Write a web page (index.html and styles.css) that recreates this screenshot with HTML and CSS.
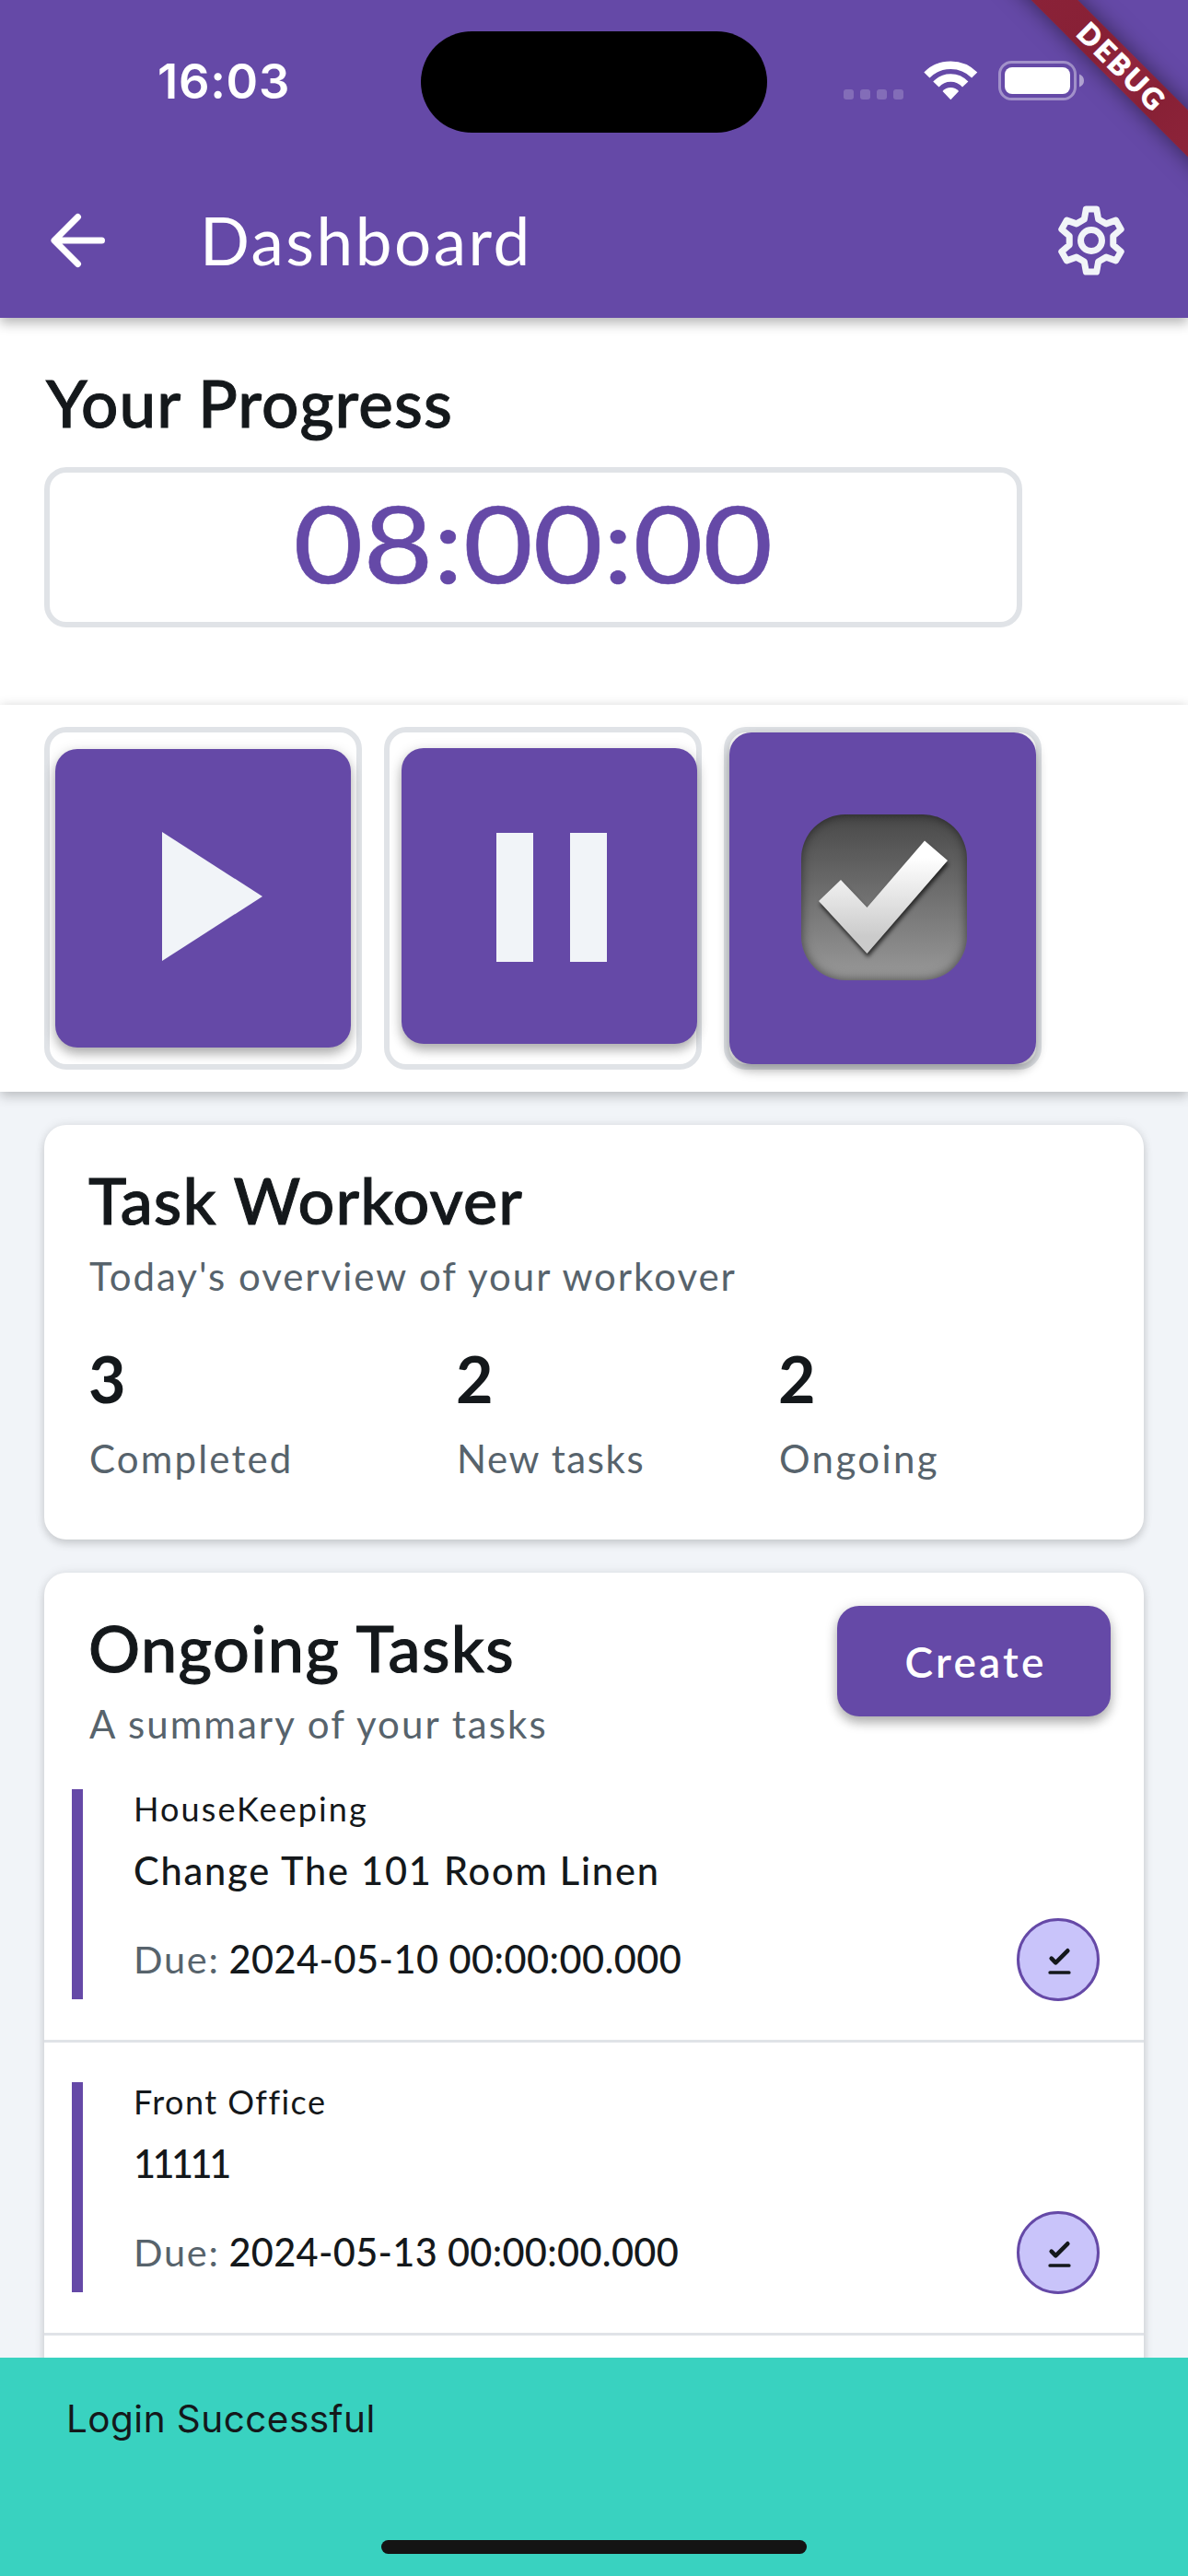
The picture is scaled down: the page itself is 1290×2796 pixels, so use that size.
FILE: index.html
```
<!DOCTYPE html>
<html lang="en">
<head>
<meta charset="utf-8">
<title>Dashboard</title>
<link rel="stylesheet" href="styles.css">
</head>
<body>
<div class="screen">
  <header class="header">
    <div class="status">
      <span class="clock">16:03</span>
      <svg class="status-icons" width="262" height="44" viewBox="916 64 262 44">
        <g fill="#fff" fill-opacity=".2">
          <rect x="916" y="96" width="11" height="11" rx="3"/><rect x="934" y="96" width="11" height="11" rx="3"/><rect x="952" y="96" width="11" height="11" rx="3"/><rect x="970" y="96" width="11" height="11" rx="3"/>
        </g>
        <g fill="none" stroke="#fff" stroke-width="8.6">
          <path d="M1006.4 80.5A36.4 36.4 0 0 1 1058.2 80.5"/>
          <path d="M1016.4 90.5A21.5 21.5 0 0 1 1048.2 90.5"/>
        </g>
        <path fill="#fff" d="M1032.3 107.2L1023.5 98Q1027 94 1032.3 94T1041.1 98Z"/>
        <rect x="1085.5" y="66.5" width="82" height="40" rx="13" fill="none" stroke="#fff" stroke-opacity=".4" stroke-width="3"/>
        <rect x="1091" y="72" width="71" height="29" rx="8" fill="#fff"/>
        <path d="M1172 79.500Q1177 81.500 1177 86.500T1172 93.500Z" fill="#fff" fill-opacity=".5"/>
      </svg>
      <div class="island"></div>
    </div>
    <div class="toolbar">
      <svg width="60" height="60" viewBox="55 231 60 60" fill="none" stroke="#fff" stroke-width="7" stroke-linecap="round" stroke-linejoin="round"><path d="M84.500 235.500L59 261L84.500 286.500M60 261H110.500"/></svg>
      <h1 class="title">Dashboard</h1>
      <svg width="76" height="76" viewBox="-114 -114 228 228" fill="none" stroke="#f1f4f8" stroke-width="21"><path stroke-linejoin="round" d="M-23-69L-17-102H17L23-69L48.300-54.400L79.800-65.700L96.800-36.300L71.300-14.600V14.600L96.800 36.300L79.800 65.700L48.300 54.400L23 69L17 102H-17L-23 69L-48.300 54.400L-79.800 65.700L-96.800 36.300L-71.300 14.600V-14.600L-96.800-36.300L-79.800-65.700L-48.300-54.400Z"/><circle r="34.500"/></svg>
    </div>
    <div class="debug">DEBUG</div>
  </header>

  <section class="progress">
    <h2 class="heading progress-title">Your Progress</h2>
    <div class="timer"><span class="timer-value">08:00:00</span></div>
  </section>

  <section class="controls">
    <div class="control">
      <button class="control-button play" aria-label="Start"><svg width="109" height="140" viewBox="0 0 109 140"><path d="M0 0L109 70L0 140Z" fill="#f1f4f8"/></svg></button>
    </div>
    <div class="control">
      <button class="control-button pause" aria-label="Pause"><svg width="120" height="140" viewBox="0 0 120 140"><path d="M0 0H40V140H0ZM80 0H120V140H80Z" fill="#f1f4f8"/></svg></button>
    </div>
    <div class="control">
      <button class="control-button done" aria-label="Finish">
        <span class="check-box"><svg class="check" width="180" height="180" viewBox="0 0 180 180"><defs><linearGradient id="silver" x1="0" y1="0" x2="0" y2="1"><stop offset=".15" stop-color="#fff"/><stop offset=".85" stop-color="#cbcbcb"/></linearGradient></defs><path d="M19 94L43 71L71.500 101L134 28.500L159 50L71.500 151Z" fill="url(#silver)"/></svg></span>
      </button>
    </div>
  </section>

  <main class="content">
    <section class="card overview">
      <h2 class="heading">Task Workover</h2>
      <p class="sub overview-sub">Today's overview of your workover</p>
      <div class="stats">
        <div><div class="number">3</div><div class="sub label-completed">Completed</div></div>
        <div><div class="number">2</div><div class="sub label-new">New tasks</div></div>
        <div><div class="number">2</div><div class="sub label-ongoing">Ongoing</div></div>
      </div>
    </section>

    <section class="card tasks">
      <div class="tasks-head">
        <div>
          <h2 class="heading ongoing-title">Ongoing Tasks</h2>
          <p class="sub">A summary of your tasks</p>
        </div>
        <button class="create">Create</button>
      </div>
      <article class="task">
        <div class="bar"></div>
        <div class="task-body">
          <div class="category">HouseKeeping</div>
          <div class="task-name">Change The 101 Room Linen</div>
          <div class="due"><span class="due-label">Due:</span><span class="date">2024-05-10 00:00:00.000</span></div>
        </div>
        <svg class="complete" width="90" height="90" viewBox="0 0 90 90"><circle cx="45" cy="45" r="43.500" fill="#c9c4fa" stroke="#6549a7" stroke-width="3"/><g fill="none" stroke="#14181b" stroke-linecap="round" stroke-linejoin="round"><path stroke-width="4.600" d="M37.700 43.700L42.300 48.300L55.300 35.300"/><path stroke-width="3.700" d="M36.200 59H56.800"/></g></svg>
      </article>
      <article class="task">
        <div class="bar"></div>
        <div class="task-body">
          <div class="category front">Front Office</div>
          <div class="task-name ones">11111</div>
          <div class="due"><span class="due-label">Due:</span><span class="date second">2024-05-13 00:00:00.000</span></div>
        </div>
        <svg class="complete" width="90" height="90" viewBox="0 0 90 90"><circle cx="45" cy="45" r="43.500" fill="#c9c4fa" stroke="#6549a7" stroke-width="3"/><g fill="none" stroke="#14181b" stroke-linecap="round" stroke-linejoin="round"><path stroke-width="4.600" d="M37.700 43.700L42.300 48.300L55.300 35.300"/><path stroke-width="3.700" d="M36.200 59H56.800"/></g></svg>
      </article>
      <div class="task-next"></div>
    </section>
  </main>

  <div class="snackbar">
    <span class="message">Login Successful</span>
    <div class="home"></div>
  </div>
</div>
</body>
</html>
```
FILE: styles.css
```
* { box-sizing: border-box; margin: 0; padding: 0; }
body { background: #f1f4f8; font-family: Lato, sans-serif; color: #14181b; }
svg { display: block; flex: none; }
button { border: 0; font-family: inherit; color: #fff; background: #6549a7; }
.screen { position: relative; width: 1290px; height: 2796px; overflow: hidden; background: #f1f4f8; }

.header { position: relative; z-index: 2; height: 345px; background: #6549a7; box-shadow: 0 6px 12px rgba(0,0,0,.28); overflow: visible; color: #fff; clip-path: inset(0 0 -30px 0); }
.status { position: relative; display: flex; justify-content: space-between; align-items: flex-start; height: 177px; padding: 0 112px 0 171px; }
.clock { margin-top: 58px; font: 600 52.5px/60px Inter, sans-serif; letter-spacing: .7px; }
.status-icons { margin-top: 65px; }
.island { position: absolute; left: 457px; top: 34px; width: 376px; height: 110px; border-radius: 55px; background: #000; }
.toolbar { display: flex; align-items: center; height: 168px; padding: 0 67px 0 55px; }
.title { flex: 1; margin-left: 102px; font-size: 71px; line-height: 90px; font-weight: 400; letter-spacing: 2.5px; }
.debug { position: absolute; left: 1017.500px; top: 54.500px; width: 400px; height: 36px; transform: rotate(45deg); background: linear-gradient(90deg, #8d233a, #872035 43%, #92263e 50%, #872035 62%, #94273f); box-shadow: 0 0 24px rgba(0,0,0,.5); text-align: center; font-size: 31px; line-height: 35px; font-weight: 900; letter-spacing: 2.8px; -webkit-text-stroke: .8px #fff; }

.progress { height: 420px; padding: 47px 48px 0; background: #fff; }
.heading { font-size: 70px; line-height: 90px; font-weight: 500; letter-spacing: 1.15px; -webkit-text-stroke: 1px #14181b; }
.progress-title { padding-left: 2px; font-size: 71px; letter-spacing: 1.1px; }
.timer { width: 1062px; height: 174px; margin-top: 25px; padding-bottom: 12px; border: 6px solid #e0e3e7; border-radius: 24px; display: flex; align-items: center; justify-content: center; color: #6549a7; }
.timer-value { font-size: 117px; line-height: 150px; transform: scaleX(1.118); -webkit-text-stroke: .6px #6549a7; }

.controls { position: relative; display: flex; gap: 24px; height: 420px; padding: 24px 48px; background: #fff; box-shadow: 0 6px 12px rgba(0,0,0,.16), 0 0 12px rgba(0,0,0,.1); }
.control { width: 345px; height: 372px; border: 6px solid #e0e3e7; border-radius: 24px; }
.control-button { display: flex; align-items: center; border-radius: 24px; box-shadow: 0 7px 12px rgba(0,0,0,.26), 0 2px 15px rgba(0,0,0,.12); }
.play { width: 321px; height: 324px; margin: 18px 0 0 6px; padding-left: 116px; padding-bottom: 4px; }
.pause { width: 321px; height: 321px; margin: 17px 0 0 13px; padding-left: 103px; padding-top: 3px; }
.done { width: 333px; height: 360px; padding-left: 78px; padding-bottom: 2px; }
.check-box { width: 180px; height: 180px; border-radius: 48px; background: linear-gradient(#484848, #999); box-shadow: inset 0 0 12px rgba(0,0,0,.55); }
.check { filter: drop-shadow(1px 4px 2px rgba(0,0,0,.65)); }

.content { padding: 36px 48px 0; display: flex; flex-direction: column; gap: 36px; }
.card { border-radius: 24px; background: #fff; box-shadow: 0 5px 10px rgba(0,0,0,.13), 0 0 12px rgba(0,0,0,.09); }
.overview { height: 450px; padding: 36px 48px; }
.sub { padding: 1px 0 0 1px; font-size: 42px; line-height: 54px; letter-spacing: 2.07px; color: #57636c; white-space: nowrap; }
.heading + .sub { margin-top: 10px; }
.overview-sub { letter-spacing: 1.97px; }
.stats { display: grid; grid-template-columns: 399px 350px auto; margin-top: 39px; }
.number { font-size: 70px; line-height: 90px; font-weight: 700; margin-bottom: 14px; }
.label-completed { letter-spacing: 2.15px; }
.label-new { letter-spacing: 1.6px; }
.label-ongoing { letter-spacing: 2.4px; }

.tasks-head { display: flex; justify-content: space-between; align-items: flex-start; height: 192px; padding: 36px 36px 0 48px; }
.ongoing-title { letter-spacing: 1.45px; }
.create { width: 297px; height: 120px; padding-left: 4px; border-radius: 24px; font-size: 46px; font-weight: 600; letter-spacing: 3.2px; box-shadow: 0 7px 12px rgba(0,0,0,.26), 0 2px 15px rgba(0,0,0,.12); }
.task { display: flex; height: 318px; padding: 43px 48px 44px 30px; border-bottom: 3px solid #e0e3e7; }
.bar { width: 12px; background: #6549a7; }
.task-body { flex: 1; margin-left: 54px; padding-left: 1px; }
.category { font-size: 36px; line-height: 42px; letter-spacing: 2.1px; }
.front { letter-spacing: 1.45px; }
.task-name { margin-top: 19px; font-size: 41.500px; line-height: 54px; font-weight: 500; letter-spacing: 1.8px; }
.ones { letter-spacing: -3.53px; }
.due { display: flex; margin-top: 42px; font-size: 41.500px; line-height: 54px; }
.due-label { color: #57636c; letter-spacing: 1.7px; }
.date { margin-left: 10px; font-weight: 500; letter-spacing: .46px; }
.second { letter-spacing: .32px; }
.complete { align-self: flex-end; margin-bottom: -2px; }
.task-next { height: 318px; }

.snackbar { position: absolute; left: 0; right: 0; bottom: 0; height: 237px; z-index: 3; padding: 40px 72px; background: #39d2c0; }
.message { display: block; font: 400 40.5px/54px Inter, sans-serif; letter-spacing: .45px; }
.home { width: 462px; height: 15px; margin: 104px auto 0; border-radius: 8px; background: #141414; }
```
